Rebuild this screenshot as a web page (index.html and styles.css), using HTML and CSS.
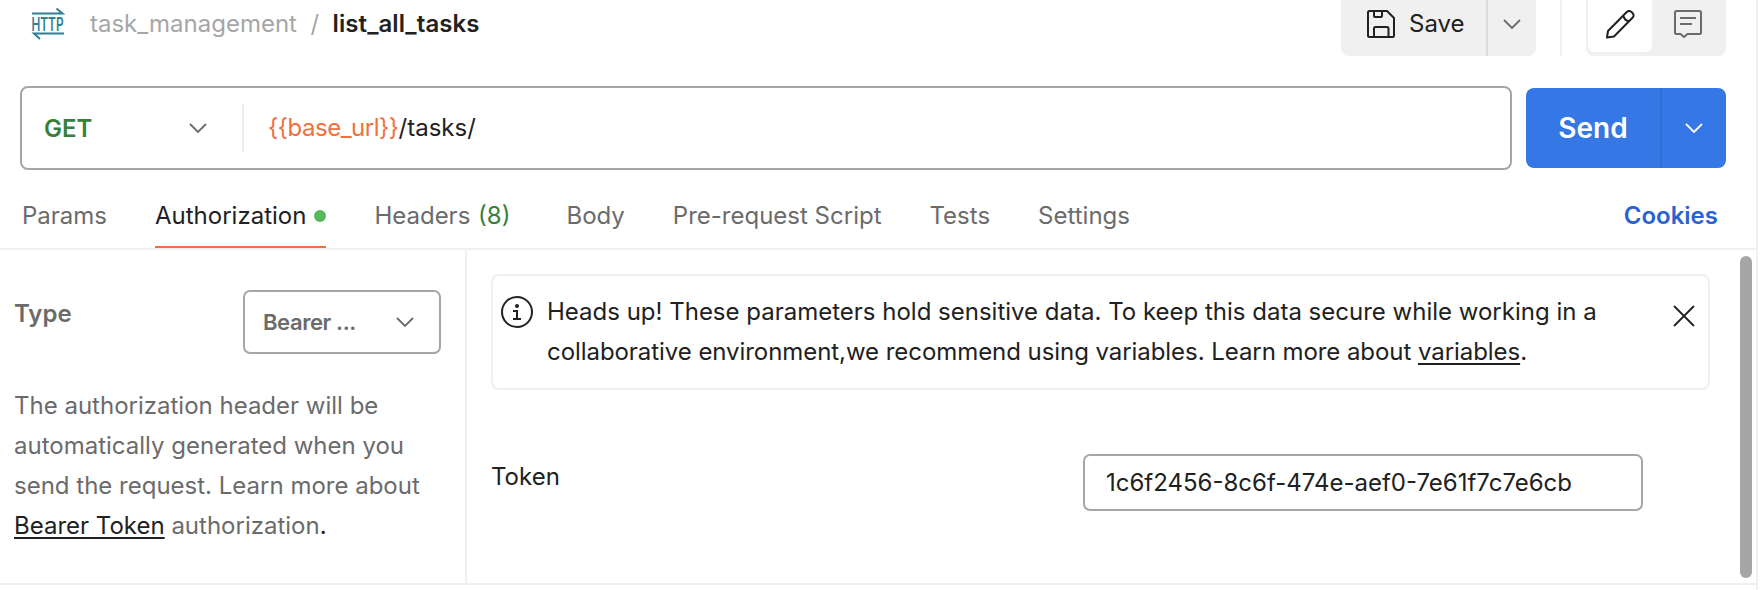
FILE: index.html
```html
<!DOCTYPE html>
<html lang="en">
<head>
<meta charset="utf-8">
<title>list_all_tasks</title>
<link rel="stylesheet" href="styles.css">
</head>
<body>
<main class="request">
  <header class="topbar">
    <svg class="http-icon" width="34" height="34" viewBox="0 0 34 34" fill="none">
      <path d="M1 6.500H31.500L25.500 1.500M33 26.500H3L9 32" stroke="#2f7f93" stroke-width="2"/>
      <text class="http-label" x="0.500" y="24" textLength="32" lengthAdjust="spacingAndGlyphs">HTTP</text>
    </svg>
    <nav class="crumbs"><span>task_management</span><span class="slash">/</span><b>list_all_tasks</b></nav>
    <div class="save">
      <button class="save-main">
        <svg width="28" height="28" viewBox="0 0 28 28" fill="none" stroke="#212121" stroke-width="2" stroke-linejoin="round"><path d="M2.500 1H20L27 8V25.500A1.500 1.500 0 0 1 25.500 27H2.500A1.500 1.500 0 0 1 1 25.500V2.500A1.500 1.500 0 0 1 2.500 1ZM7 1V6A1 1 0 0 0 8 7H14A1 1 0 0 0 15 6V1M7 27V18.500A1.500 1.500 0 0 1 8.500 17H20A1.500 1.500 0 0 1 21.500 18.500V27"/></svg>
        <span>Save</span>
      </button>
      <button class="save-more"><svg width="18" height="11" viewBox="0 0 18 11" fill="none" stroke="#6b6b6b" stroke-width="1.800"><path d="M1 1L9 9L17 1"/></svg></button>
    </div>
    <i class="top-divider"></i>
    <div class="toggle">
      <span class="toggle-on"><svg width="29" height="29" viewBox="0 0 29 29" fill="none" stroke="#212121" stroke-width="2" stroke-linejoin="round"><path d="M1 27.500L2 21L20.500 2.300C22 .8 24 .7 25.500 2L26.500 3C28 4.500 28 6.300 26.500 7.800L8 26.500L1 27.500ZM17.300 5.500C18 9 20 11 23.500 11.300"/></svg></span>
      <span class="toggle-off"><svg width="28" height="28" viewBox="0 0 28 28" fill="none" stroke="#6b6b6b" stroke-width="2" stroke-linejoin="round"><path d="M2.500 1H25.500A1.500 1.500 0 0 1 27 2.500V22.500A1.500 1.500 0 0 1 25.500 24H13.500L10 27L6.500 24H2.500A1.500 1.500 0 0 1 1 22.500V2.500A1.500 1.500 0 0 1 2.500 1ZM6 8H22M6 14H18"/></svg></span>
    </div>
  </header>

  <section class="urlbar">
    <div class="url-box">
      <div class="method"><b>GET</b><svg width="18" height="11" viewBox="0 0 18 11" fill="none" stroke="#6b6b6b" stroke-width="1.800"><path d="M1 1L9 9L17 1"/></svg></div>
      <div class="url"><span class="variable">{{base_url}}</span>/tasks/</div>
    </div>
    <div class="send">
      <button class="send-main">Send</button>
      <button class="send-more"><svg width="18" height="11" viewBox="0 0 18 11" fill="none" stroke="#fff" stroke-width="1.800"><path d="M1 1L9 9L17 1"/></svg></button>
    </div>
  </section>

  <nav class="tabs">
    <a class="tab">Params</a>
    <a class="tab active">Authorization<i class="dot"></i></a>
    <a class="tab headers">Headers <span class="count">(8)</span></a>
    <a class="tab">Body</a>
    <a class="tab">Pre-request Script</a>
    <a class="tab">Tests</a>
    <a class="tab">Settings</a>
    <a class="cookies">Cookies</a>
  </nav>

  <section class="content">
    <aside class="auth">
      <div class="type-row">
        <span class="type-label">Type</span>
        <div class="select"><span>Bearer ...</span><svg width="18" height="11" viewBox="0 0 18 11" fill="none" stroke="#6b6b6b" stroke-width="1.800"><path d="M1 1L9 9L17 1"/></svg></div>
      </div>
      <p class="help">The authorization header will be<br>automatically generated when you<br>send the request. Learn more about<br><a class="link">Bearer Token</a> authorization<span class="stop">.</span></p>
    </aside>
    <div class="details">
      <div class="alert">
        <svg class="info" width="32" height="32" viewBox="0 0 32 32" fill="none" stroke="#212121" stroke-width="2"><circle cx="16" cy="16" r="15"/><path d="M12 15H16V23M12 23H20"/><circle cx="16" cy="10" r="2" fill="#212121" stroke="none"/></svg>
        <p class="alert-text">Heads up! These parameters hold sensitive data. To keep this data secure while working in a<br><span class="second-line">collaborative environment,we recommend using variables. Learn more about <a class="link">variables</a>.</span></p>
        <svg class="close" width="22" height="22" viewBox="0 0 22 22" fill="none" stroke="#212121" stroke-width="1.800"><path d="M1 1L21 21M21 1L1 21"/></svg>
      </div>
      <div class="token-row">
        <label class="token-label">Token</label>
        <div class="token-input">1c6f2456-8c6f-474e-aef0-7e61f7c7e6cb</div>
      </div>
    </div>
    <div class="scrollbar"><i class="thumb"></i></div>
  </section>
</main>
</body>
</html>
```
FILE: styles.css
```css
* { box-sizing: border-box; }
body {
  margin: 0;
  background: #fff;
  color: #212121;
  font: 24px/40px Inter, "Liberation Sans", sans-serif;
}
svg { display: block; flex: none; }
button { border: 0; padding: 0; background: none; font: inherit; color: inherit; }
p { margin: 0; }

.request {
  width: 1758px;
  height: 590px;
  border-right: 2px solid #f0f0f0;
  overflow: hidden;
}

.topbar { display: flex; height: 56px; padding-right: 30px; }
.http-icon { margin: 7px 0 0 31px; overflow: visible; }
.http-label { font-size: 18.500px; font-weight: 600; fill: #2f7f93; }
.crumbs { display: flex; margin: 4px auto 0 25px; color: #a6a6a6; }
.crumbs b { font-weight: 600; color: #212121; letter-spacing: 0.08px; }
.slash { margin: 0 13.500px; }
.save { display: flex; background: #f0f0f0; border-radius: 0 0 8px 8px; }
.save-main {
  display: flex;
  align-items: center;
  gap: 14px;
  width: 147px;
  padding: 0 0 8px 26px;
  border-right: 2px solid #dcdcdc;
}
.save-more { display: grid; place-items: center; width: 48px; padding-bottom: 8px; }
.top-divider { width: 2px; margin: 0 24px; background: #f0f0f0; }
.toggle {
  display: flex;
  width: 140px;
  padding: 0 0 4px 2px;
  background: #f0f0f0;
  border-radius: 0 0 8px 8px;
}
.toggle-on {
  width: 64px;
  padding: 10px 0 0 18px;
  background: #fff;
  border-radius: 0 0 6px 6px;
}
.toggle-off { padding: 10px 0 0 22px; }

.urlbar { display: flex; gap: 14px; padding: 30px 30px 0 20px; }
.url-box {
  display: flex;
  align-items: center;
  width: 1492px;
  height: 84px;
  border: 2px solid #a6a6a6;
  border-radius: 8px;
}
.method {
  display: flex;
  align-items: center;
  justify-content: space-between;
  width: 222px;
  height: 48px;
  padding: 0 35px 0 22px;
  border-right: 2px solid #ededed;
}
.method b { margin-top: 2px; font-weight: 600; color: #388038; }
.url { padding-left: 24px; }
.variable { color: #f0703e; letter-spacing: -0.480px; }
.send {
  display: flex;
  width: 200px;
  height: 80px;
  margin-top: 2px;
  background: #3578e5;
  border-radius: 8px;
  color: #fff;
}
.send-main {
  width: 136px;
  border-right: 2px solid #2f6dd2;
  font-size: 28px;
  font-weight: 600;
}
.send-more { flex: 1; display: grid; place-items: center; }

.tabs {
  display: flex;
  gap: 48px;
  height: 80px;
  padding: 26px 38px 0 22px;
  border-bottom: 2px solid #f0f0f0;
  color: #6b6b6b;
}
.tab { height: 52px; white-space: nowrap; }
.tab.active {
  display: flex;
  gap: 8px;
  border-bottom: 2px solid #f0703e;
  color: #212121;
}
.tab.headers { margin-right: 8px; }
.dot { width: 12px; height: 12px; margin-top: 14px; border-radius: 50%; background: #55b95c; }
.count { margin-left: 1px; color: #388038; }
.cookies { margin-left: auto; font-weight: 600; color: #2a63d0; }

.content { display: flex; height: 335px; border-bottom: 2px solid #f0f0f0; }
.auth { width: 467px; padding: 40px 24px 0 14px; border-right: 2px solid #f0f0f0; color: #6b6b6b; }
.type-row { display: flex; justify-content: space-between; }
.type-label { margin-top: 4px; font-weight: 600; }
.select {
  display: flex;
  align-items: center;
  justify-content: space-between;
  width: 198px;
  height: 64px;
  padding: 0 25px 0 18px;
  border: 2px solid #a6a6a6;
  border-radius: 7px;
  font-size: 22px;
  font-weight: 600;
  letter-spacing: -0.400px;
}
.help { margin-top: 32px; white-space: nowrap; }
.link {
  color: #212121;
  text-decoration: underline;
  text-decoration-thickness: 2px;
  text-underline-offset: 3px;
  text-decoration-skip-ink: none;
}
.stop { color: #212121; }

.details { padding: 24px 0 0 24px; }
.alert {
  display: flex;
  width: 1219px;
  height: 116px;
  padding: 16px 13px 0 8px;
  border: 2px solid #f0f0f0;
  border-radius: 8px;
}
.info { margin-top: 4px; }
.alert-text { margin-left: 14px; white-space: nowrap; }
.second-line { letter-spacing: -0.060px; }
.close { margin: 13px 0 0 auto; }
.token-row {
  display: flex;
  justify-content: space-between;
  width: 1152px;
  margin-top: 64px;
}
.token-label { margin-top: 3px; }
.token-input {
  width: 560px;
  height: 57px;
  padding: 7px 0 0 21px;
  border: 2px solid #a6a6a6;
  border-radius: 7px;
}
.scrollbar { margin-left: auto; padding: 6px 4px 5px 0; }
.thumb { display: block; width: 12px; height: 322px; border-radius: 6px; background: #a6a6a6; }
```
